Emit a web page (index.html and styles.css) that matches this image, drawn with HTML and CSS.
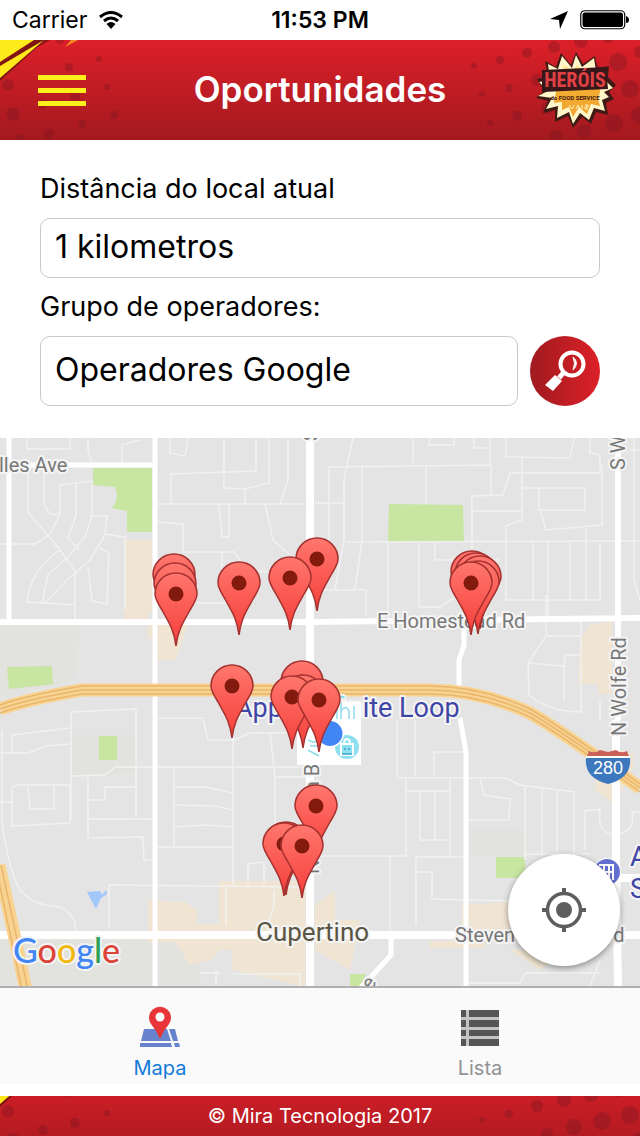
FILE: index.html
```html
<!DOCTYPE html>
<html lang="pt-BR">
<head>
<meta charset="utf-8">
<meta name="viewport" content="width=device-width, initial-scale=1">
<title>Oportunidades</title>
<link rel="stylesheet" href="styles.css">
</head>
<body>
<svg class="defs" aria-hidden="true">
  <defs>
    <linearGradient id="pinFill" x1="0" y1="0" x2="0" y2="1">
      <stop offset="0" stop-color="#ff776e"/><stop offset="1" stop-color="#f53e3a"/>
    </linearGradient>
    <linearGradient id="barFill" x1="0" y1="0" x2="0" y2="1">
      <stop offset="0" stop-color="#dc2029"/><stop offset="1" stop-color="#a3191f"/>
    </linearGradient>
    <linearGradient id="burst" x1="0" y1="0" x2="0" y2="1">
      <stop offset="0" stop-color="#fff2a8"/><stop offset=".4" stop-color="#f2ae32"/><stop offset="1" stop-color="#f0a52f"/>
    </linearGradient>
    <g id="pin">
      <path d="M0 52C-2 35-8 27-14 16C-19 8-21 4-21 0A21 21 0 0 1 21 0C21 4 19 8 14 16C8 27 2 35 0 52Z" fill="url(#pinFill)" stroke="#a5312f" stroke-width="1.5"/>
      <circle r="7.5" fill="#821a0e"/>
    </g>
    <g id="comic">
      <rect width="640" height="100" fill="url(#barFill)"/>
      <g fill="#7a1622" fill-opacity=".36">
        <circle cx="69" cy="27" r="4"/><circle cx="99" cy="19" r="3"/><circle cx="8" cy="45" r="6"/><circle cx="13" cy="74" r="7"/><circle cx="49" cy="94" r="5"/><circle cx="82" cy="84" r="4"/><circle cx="114" cy="75" r="4"/><circle cx="107" cy="47" r="3"/><circle cx="60" cy="0" r="4"/><circle cx="75" cy="57" r="5"/><circle cx="43" cy="64" r="5"/><circle cx="20" cy="99" r="5"/>
        <circle cx="474" cy="26" r="3"/><circle cx="500" cy="20" r="4"/><circle cx="527" cy="13" r="5"/><circle cx="554" cy="7" r="6"/><circle cx="581" cy="1" r="7"/><circle cx="608" cy="-4" r="7"/><circle cx="482" cy="54" r="3"/><circle cx="509" cy="48" r="4"/><circle cx="537" cy="40" r="6"/><circle cx="564" cy="34" r="7"/><circle cx="618" cy="22" r="9"/><circle cx="591" cy="28" r="8"/><circle cx="602" cy="55" r="9"/><circle cx="574" cy="61" r="8"/><circle cx="547" cy="68" r="6"/><circle cx="490" cy="83" r="3"/><circle cx="517" cy="76" r="5"/><circle cx="556" cy="96" r="6"/><circle cx="584" cy="91" r="7"/><circle cx="614" cy="83" r="9"/><circle cx="630" cy="49" r="9"/><circle cx="640" cy="75" r="9"/><circle cx="640" cy="12" r="6"/>
      </g>
      <path d="M0 28L50 0H0Z" fill="#8c1315"/>
      <path d="M0 22L34 0H0Z" fill="#ffeb1c"/>
      <path d="M0 41L45 0H36L0 24Z" fill="#7d1714"/>
      <path d="M0 38L44 0L0 26Z" fill="#ffe81b"/>
      <path d="M65 7L78 0H71Z" fill="#f28a22"/>
    </g>
  </defs>
</svg>

<div class="screen">
  <div class="status">
    <span class="carrier">Carrier
      <svg width="24" height="18" viewBox="0 0 24 18" aria-hidden="true"><path d="M1 6Q12-3 23 6M5 10Q12 4 19 10" fill="none" stroke="#000" stroke-width="3"/><path d="M7.500 13Q12 9 16.500 13L12 18Z"/></svg>
    </span>
    <time class="clock">11:53 PM</time>
    <span class="power">
      <svg width="18" height="18" viewBox="0 0 18 18" aria-hidden="true"><path d="M0 8L18 0L10 18L9 9Z"/></svg>
      <svg width="50" height="20" viewBox="0 0 50 20" aria-hidden="true"><rect x=".75" y=".75" width="44" height="18" rx="4" fill="none" stroke="#000" stroke-width="1.200"/><rect x="2.500" y="2.500" width="40.500" height="14.500" rx="2.500"/><path d="M46 6Q49 7 49 10T46 13Z"/></svg>
    </span>
  </div>

  <header class="bar">
    <svg class="bar-art" viewBox="0 0 640 100" preserveAspectRatio="xMidYMid slice" aria-hidden="true"><use href="#comic"/></svg>
    <button class="menu" type="button" aria-label="Menu"><i></i><i></i><i></i></button>
    <h1>Oportunidades</h1>
    <svg class="logo" viewBox="0 0 80 76" role="img" aria-label="Heróis do Food Service">
      <path d="M9 9L20 15L25 1L35 13L40 0L47 12L59 4L61 16L73 14L72 25L80 33L73 40L78 47L70 51L72 63L60 60L55 72L46 65L37 76L32 64L19 70L19 58L7 61L12 49L0 46L8 39L1 27L12 25Z" fill="#401a14"/>
      <path d="M12 12L22 17L26 4L36 16L40 3L46 15L58 6L60 19L70 17L68 27L77 36L68 40L73 45L66 48L69 59L58 56L53 68L44 61L37 72L33 60L21 66L22 54L10 57L16 46L2 44L12 39L3 30L14 28Z" fill="#fff6c9"/>
      <path d="M19 20L26 20L28 12L37 20L41 12L48 21L56 15L59 24L65 22L64 40L62 47L64 54L55 52L51 62L43 55L37 65L33 55L26 58L26 50L18 51L20 40Z" fill="url(#burst)"/>
      <path d="M6 18L70 15L72 37L6 40Z" fill="#38171a"/>
      <text class="logo-name" x="39" y="35" text-anchor="middle">HERÓIS</text>
      <text class="logo-sub" x="39" y="48" text-anchor="middle">do FOOD SERVICE</text>
      <path d="M33 53l3 4l2-4m2 4l2-4l2 4m2-4v4m3-4h3v2h-3v2h3" fill="none" stroke="#fff3c4"/>
    </svg>
  </header>

  <form class="filters">
    <label for="distance">Distância do local atual</label>
    <input id="distance" type="text" value="1 kilometros">
    <label for="group">Grupo de operadores:</label>
    <div class="search-row">
      <input id="group" type="text" value="Operadores Google">
      <button class="search" type="button" aria-label="Buscar">
        <svg width="70" height="70" viewBox="0 0 70 70" aria-hidden="true"><circle cx="42" cy="28" r="11.500" fill="none" stroke="#fff" stroke-width="4"/><path d="M43 21Q50 27 43 34Q46 27 43 21Z" fill="#fff" stroke="#fff"/><path d="M34 36L29 42" stroke="#fff" stroke-width="5"/><path d="M25 39L32 45L23 55L15 49Z" fill="#fff"/></svg>
      </button>
    </div>
  </form>

  <main class="map">
    <svg class="map-art" viewBox="0 438 640 548" preserveAspectRatio="xMidYMid slice" role="img" aria-label="Mapa de Cupertino">
      <rect y="438" width="640" height="548" fill="#e4e4e4"/>
      <path d="M0 627H80L75 680L0 698ZM72 735H136V771L106 776H72ZM470 829H524V856H470ZM0 940H152V986H0ZM158 940H200V986H158Z" fill="#e2e2de"/>
      <g fill="#f0e4d2">
        <path d="M125 540H152V610L146 619H124ZM148 625H188L176 660H158V640L148 638ZM148 900L185 902L197 910V925L219 923V881H305V986H300L232 970V950H220L210 960L190 965L175 942H148ZM315 905L335 890V920H360L350 970L315 950ZM462 905L510 902V930H485V948H430V941H462ZM580 640L590 625L612 621V694H598V684H578Z"/>
        <path d="M595 775Q610 740 634 755L632 770L615 805L595 790ZM510 950H565L540 970Z"/>
      </g>
      <g fill="#c8e5a1">
        <path d="M93 468H152V532H127V511L112 508Q120 498 115 487L93 485ZM389 504L463 505L464 542H388ZM7 667L52 666L53 684L9 689Z"/>
        <path d="M99 736H117V760H99ZM496 857H525V878H496ZM350 974H366L360 986H350Z"/>
      </g>
      <path d="M87 892L100 891L102 895L106 890L107 894L101 898L96 909Z" fill="#a2c7fa"/>
      <g fill="none" stroke="#f1f1f1" stroke-width="1.500">
        <path d="M27 438V449H70V438M88 438V450L92 465M122 465V445L140 440M28 470V512L60 550L75 571V619M44 470V505L50 514H60M60 514V485L92 481V515L86 535L70 555L48 575L42 603M60 550Q30 570 27 602L75 605M0 544H35L50 534L60 514M76 482V515L68 538L79 550M92 516H107L105 535L90 560L67 580L45 603M88 567L92 601L107 604L109 553L100 548M105 534L125 537V610"/>
        <path d="M170 438V453L185 456L188 438M171 503V474L256 471V438M224 438V488L245 489L269 483V438M288 438V480L280 504M245 489V504M157 504H305M157 522L183 524V552H235L245 570L308 576M219 504L222 537H229V504M265 504L273 540L290 555M195 603H230M222 552V570"/>
        <path d="M353 438L344 480V540L335 590M329 570V467L490 465V438M413 438V463M426 465V503M362 465V540L355 590H314M430 438L429 445H454V438M474 438V448H491M315 503H344M346 542L640 541M388 542V615M419 543V607H440L454 598M435 542V560H500M472 549V496L503 495L510 473H600V455L590 453V438M491 465V495M506 438V457L570 458L574 438M522 457V520L506 526V600H600V541M473 511H523M522 488H585V510H539V488M540 510L546 530L602 525V465M548 542V619M533 541V600M570 541V600M586 528V600M357 589L366 590V615M634 438V580L640 600M630 450H640"/>
        <path d="M0 753H28L45 746L70 744M12 752V735L70 728M71 820V712L136 709V819M71 776L105 775L115 767H310M88 777V838L143 837L144 860H155M88 819H152M88 800H105V787H136M12 790Q12 785 20 785H70V823L12 826ZM28 787L30 809H54V785M2 730V820Q5 850 15 880Q24 905 60 907Q77 915 75 930M109 928V885L310 887M0 802H12M200 973H220M216 970V986M233 974H300V986"/>
        <path d="M158 718H203L208 740H234L250 733H310M233 735V885M270 733L275 777V850M174 768V846M175 787H205L233 793M174 805L215 806L233 810M174 827L205 825L233 827M158 847H233M274 777H310M248 885V864L264 862V885M226 887V925M274 890V905L268 925"/>
        <path d="M397 720V778H505L520 785L574 792V855M415 720V776M434 775V752H466M406 778V856H320M406 791H450M450 778V856M420 792V840H450M435 792V840M480 778L484 795L510 799L509 820H468M525 786V860M542 788V856M557 790V856M524 854H590M585 850V811L600 809Q597 834 614 834Q636 834 632 812H640M390 857V933M416 925V857H465M416 872H432V899L510 901M546 635V595M546 636H580M546 636L528 663L529 695Q550 712 581 712V620M528 663L564 666V700M564 670L565 655H580M600 700V720M468 983H520L526 973H600M600 960L590 986"/>
      </g>
      <g fill="none" stroke="#fff" stroke-width="5">
        <path d="M9 438V620M0 465H154M155 438V986M464 621V645L459 660V690M460 718L466 752V986M391 935V955L372 976L358 990"/>
        <path d="M0 622H310L640 618M618 438V720" stroke-width="6"/>
        <path d="M310 438V986M0 935H640M616 720V860L618 986M620 878H640" stroke-width="8"/>
      </g>
      <g fill="none">
        <path d="M0 709Q28 699 82 690H430Q480 690 530 713Q560 730 640 788M-1 865L26 990" stroke="#f9d391" stroke-width="13"/>
        <path d="M0 705Q28 695 82 686H430Q480 686 530 709Q560 726 640 784M0 709Q28 699 82 690H430Q480 690 530 713Q560 730 640 788M0 713Q28 703 82 694H430Q480 694 530 717Q560 734 640 792M-4 867L22 990M1 865L28 990" stroke="#e9b66d" stroke-width="1.500"/>
      </g>
      <g class="road-label">
        <text x="-1" y="472">lles Ave</text>
        <text x="377" y="628">E Homestead Rd</text>
        <text x="455" y="942">Stevens Creek Blvd</text>
        <text transform="translate(626 736) rotate(-90)">N Wolfe Rd</text>
        <text transform="translate(625 470) rotate(-90)">S Wolfe Rd</text>
        <text transform="translate(319 874) rotate(-90)">N De Anza B</text>
        <text transform="translate(318 441) rotate(-90)">Sa</text>
        <text transform="translate(371 991) rotate(-55)">e</text>
      </g>
      <text class="place-label" x="235" y="717">Apple I<tspan class="faded">nfin</tspan>ite Loop</text>
      <path d="M297 722H328V702H361V765H297Z" fill="#fff"/>
      <path d="M337 709V719M341 702V719M341 711Q346 704 349 711V719M354 706V719M308 740Q315 744 318 740M308 750L319 756M310 746H319" fill="none" stroke="#8edceb" stroke-width="1.500"/>
      <circle cx="347" cy="747" r="12" fill="#8edff0"/>
      <path d="M341 744H353V755H341ZM344 744Q344 739 347 739T350 744" fill="none" stroke="#fff" stroke-width="2"/>
      <path d="M345 748V750M349 748V750M342 754H352" stroke="#3ba7c4" stroke-width="1.500"/>
      <circle cx="330" cy="733.500" r="14" fill="#fff"/><circle cx="330" cy="733.500" r="12.500" fill="#4285f4"/>
      <path d="M589 751Q595 754 600 750L608 752L616 750Q621 754 627 751L630 759H586Z" fill="#c9605a"/>
      <path d="M586 758H630Q632 778 608 784Q584 778 586 758Z" fill="#3d77bd"/><path d="M586 757H630" stroke="#fff" stroke-width="2"/>
      <text class="shield-label" x="608" y="774" text-anchor="middle">280</text>
      <circle cx="607" cy="872" r="14" fill="#fff"/><circle cx="607" cy="872" r="13" fill="#6470cf"/>
      <path d="M599 865H613V880M604 865V880M609 865V880M599 872H613" fill="none" stroke="#fff" stroke-width="2"/>
      <text class="place-label" x="630" y="866">A</text><text class="place-label" x="630" y="898">S</text>
      <text class="city-label" x="256" y="941">Cupertino</text>
      <text class="google" x="13" y="963"><tspan fill="#4285f4">G</tspan><tspan fill="#db4437">o</tspan><tspan fill="#f0b90b">o</tspan><tspan fill="#4285f4">g</tspan><tspan fill="#30a057">l</tspan><tspan fill="#db4437">e</tspan></text>
      <g>
        <use href="#pin" x="174" y="575"/><use href="#pin" x="175" y="584"/><use href="#pin" x="176" y="594"/>
        <use href="#pin" x="239" y="583"/><use href="#pin" x="317" y="559"/><use href="#pin" x="290" y="578"/>
        <use href="#pin" x="472" y="572"/><use href="#pin" x="476" y="574"/><use href="#pin" x="480" y="577"/><use href="#pin" x="478" y="582"/><use href="#pin" x="471" y="583"/>
        <use href="#pin" x="232" y="686"/><use href="#pin" x="302" y="682"/><use href="#pin" x="303" y="696"/><use href="#pin" x="292" y="697"/><use href="#pin" x="319" y="700"/>
        <use href="#pin" x="316" y="806"/><use href="#pin" x="286" y="843"/><use href="#pin" x="284" y="844"/><use href="#pin" x="302" y="846"/>
      </g>
    </svg>
    <button class="locate" type="button" aria-label="Minha localização">
      <svg width="44" height="44" viewBox="0 0 44 44" aria-hidden="true"><circle cx="22" cy="22" r="8" fill="#5e5e5e"/><circle cx="22" cy="22" r="16.500" fill="none" stroke="#5e5e5e" stroke-width="3.500"/><path d="M22 0V6M22 38V44M0 22H6M38 22H44" stroke="#5e5e5e" stroke-width="4"/></svg>
    </button>
  </main>

  <nav class="tabs">
    <a class="tab active" href="#mapa">
      <svg width="40" height="44" viewBox="0 0 40 44" aria-hidden="true"><path d="M4 24H27L31 36H1ZM29 24H35L38 36H33ZM0 38H31L32 42H0ZM34 38H39L40 42H35Z" fill="#6783ce"/><path d="M20 34Q17 26 11 19A11 11 0 1 1 29 19Q23 26 20 34Z" fill="#e83537"/><circle cx="20" cy="12" r="4.500" fill="#fff"/></svg>
      Mapa
    </a>
    <a class="tab" href="#lista">
      <svg width="38" height="44" viewBox="0 0 38 44" aria-hidden="true"><path d="M0 5H38V41H0Z" fill="#c4c4c4"/><path d="M0 5H5V12H0ZM8 5H38V12H8ZM0 15H5V22H0ZM8 15H38V22H8ZM0 25H5V31H0ZM8 25H38V31H8ZM0 34H5V41H0ZM8 34H38V41H8Z" fill="#555"/></svg>
      Lista
    </a>
  </nav>

  <footer class="foot">
    <svg class="bar-art" viewBox="0 30 640 40" preserveAspectRatio="xMidYMid slice" aria-hidden="true"><use href="#comic"/></svg>
    <p>© Mira Tecnologia 2017</p>
  </footer>
</div>
</body>
</html>
```
FILE: styles.css
```css
* { box-sizing: border-box; }
body {
  margin: 0;
  background: #fff;
  color: #000;
  font-family: Inter, "Liberation Sans", sans-serif;
}
svg { display: block; }
.defs { position: absolute; width: 0; height: 0; }
button { border: 0; padding: 0; cursor: pointer; }
.screen { min-height: 100vh; display: flex; flex-direction: column; }

.status {
  height: 40px;
  padding: 0 12px;
  display: grid;
  grid-template-columns: 1fr auto 1fr;
  align-items: center;
  font-size: 23px;
}
.carrier, .power { display: flex; align-items: center; gap: 12px; }
.power { justify-content: flex-end; }
.power svg:last-child { margin-right: -2px; }
.clock { font-weight: 600; }

.bar {
  position: relative;
  height: 100px;
  padding: 0 24px;
  display: grid;
  grid-template-columns: 1fr auto 1fr;
  align-items: center;
}
.bar-art { position: absolute; inset: 0; width: 100%; height: 100%; }
.menu {
  position: relative;
  width: 48px;
  margin-left: 14px;
  display: flex;
  flex-direction: column;
  gap: 8px;
  background: none;
}
.menu i { height: 5px; width: 100%; background: #fff01c; }
.bar h1 {
  position: relative;
  margin: 0;
  padding-bottom: 2px;
  color: #fff;
  font-size: 35px;
  font-weight: 600;
}
.logo { position: relative; justify-self: end; width: 80px; height: 76px; }
.logo-name { font: bold 20px "Liberation Sans Narrow", "Roboto Condensed", Roboto, sans-serif; fill: #df4144; }
.logo-sub { font: bold 6px "Liberation Sans Narrow", Roboto, sans-serif; fill: #40150e; }

.filters {
  padding: 30px 40px 32px;
  display: flex;
  flex-direction: column;
}
.filters label { font-size: 27px; line-height: 38px; margin-bottom: 10px; }
.filters input {
  width: 100%;
  height: 60px;
  padding: 0 14px 4px;
  border: 1px solid #c9c9c9;
  border-radius: 10px;
  background: #fff;
  color: #000;
  font: 32px Inter, "Liberation Sans", sans-serif;
}
.filters input + label { margin-top: 10px; }
.search-row { display: flex; gap: 12px; }
.filters .search-row input { flex: 1; min-width: 0; height: 70px; }
.search {
  width: 70px;
  height: 70px;
  border-radius: 50%;
  background: linear-gradient(90deg, #9f1b20, #dc2027);
}

.map { position: relative; flex: 1 0 548px; }
.map-art { position: absolute; inset: 0; width: 100%; height: 100%; }
.map text { paint-order: stroke; stroke: #f4f4f4; stroke-width: 4px; stroke-linejoin: round; }
.road-label text { font: 20px Roboto, sans-serif; fill: #777; }
.map .place-label { font: 27px Roboto, sans-serif; fill: #3e46a6; }
.map .faded { fill: #8edceb; }
.map .city-label { font: 26px Roboto, sans-serif; fill: #5b5443; }
.map .shield-label { font: 18px "Liberation Sans", sans-serif; fill: #fff; stroke: none; }
.map .google { font: 500 34px Lato, sans-serif; }
.locate {
  position: absolute;
  right: 20px;
  bottom: 20px;
  width: 112px;
  height: 112px;
  display: grid;
  place-items: center;
  border-radius: 50%;
  background: #fff;
  box-shadow: 0 2px 6px rgba(0, 0, 0, .4);
}

.tabs {
  height: 98px;
  margin-bottom: 12px;
  display: flex;
  border-top: 2px solid #b0b0b0;
  background: #fafafa;
}
.tab {
  flex: 1;
  display: flex;
  flex-direction: column;
  align-items: center;
  gap: 6px;
  padding-top: 17px;
  color: #929292;
  font-size: 20px;
  line-height: 26px;
  text-decoration: none;
}
.tab.active { color: #127bd8; }

.foot { position: relative; height: 40px; display: grid; place-items: center; }
.foot p { position: relative; margin: 0; color: #fff; font-size: 20px; }
```
